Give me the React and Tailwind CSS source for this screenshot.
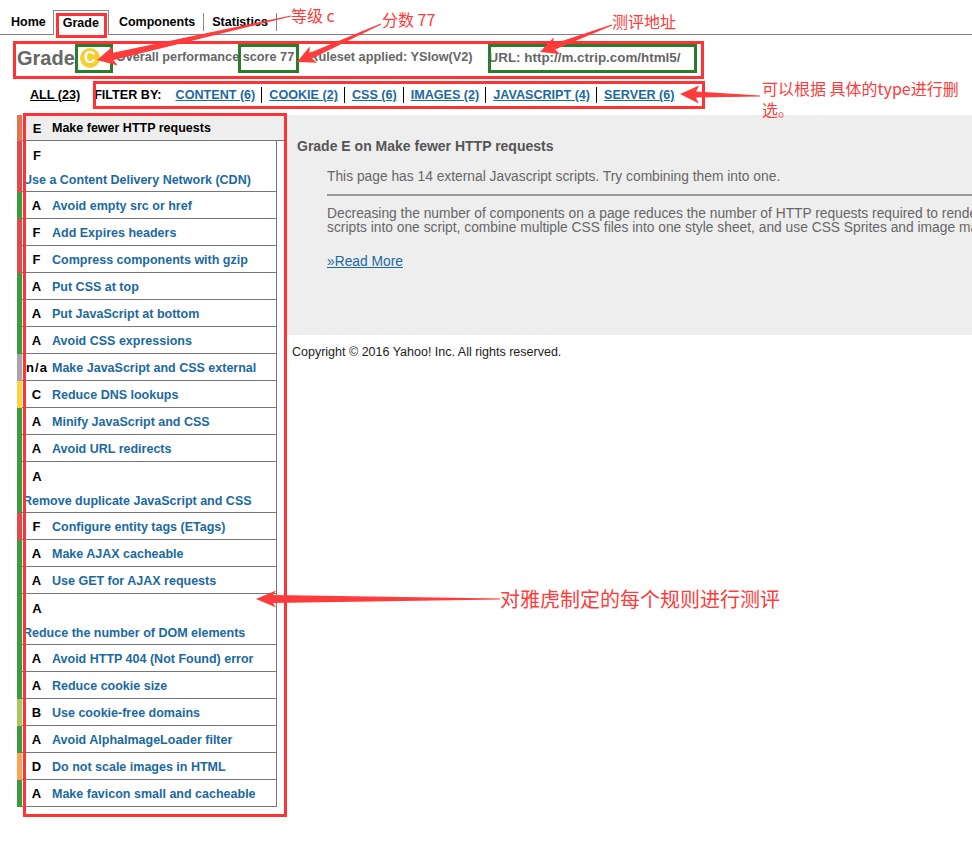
import React from 'react';

const BAR = {
  E: 'bg-[#e2744f]',
  F: 'bg-[#dc4a4a]',
  A: 'bg-[#3c9b3c]',
  'n/a': 'bg-[#a6a6a6]',
  C: 'bg-[#f6d43c]',
  B: 'bg-[#a9c75c]',
  D: 'bg-[#f6a452]',
};

const rules = [
  { grade: 'E', label: 'Make fewer HTTP requests', selected: true },
  { grade: 'F', label: 'Use a Content Delivery Network (CDN)', wrap: true },
  { grade: 'A', label: 'Avoid empty src or href' },
  { grade: 'F', label: 'Add Expires headers' },
  { grade: 'F', label: 'Compress components with gzip' },
  { grade: 'A', label: 'Put CSS at top' },
  { grade: 'A', label: 'Put JavaScript at bottom' },
  { grade: 'A', label: 'Avoid CSS expressions' },
  { grade: 'n/a', label: 'Make JavaScript and CSS external' },
  { grade: 'C', label: 'Reduce DNS lookups' },
  { grade: 'A', label: 'Minify JavaScript and CSS' },
  { grade: 'A', label: 'Avoid URL redirects' },
  { grade: 'A', label: 'Remove duplicate JavaScript and CSS', wrap: true },
  { grade: 'F', label: 'Configure entity tags (ETags)' },
  { grade: 'A', label: 'Make AJAX cacheable' },
  { grade: 'A', label: 'Use GET for AJAX requests' },
  { grade: 'A', label: 'Reduce the number of DOM elements', wrap: true },
  { grade: 'A', label: 'Avoid HTTP 404 (Not Found) error' },
  { grade: 'A', label: 'Reduce cookie size' },
  { grade: 'B', label: 'Use cookie-free domains' },
  { grade: 'A', label: 'Avoid AlphaImageLoader filter' },
  { grade: 'D', label: 'Do not scale images in HTML' },
  { grade: 'A', label: 'Make favicon small and cacheable' },
];

const filters = ['CONTENT (6)', 'COOKIE (2)', 'CSS (6)', 'IMAGES (2)', 'JAVASCRIPT (4)', 'SERVER (6)'];

// tapered red arrow, thin at the tail and wide at the head
function arrowPoints(x1, y1, x2, y2, shaftW, headW, headL) {
  const dx = x2 - x1;
  const dy = y2 - y1;
  const len = Math.hypot(dx, dy);
  const ux = dx / len;
  const uy = dy / len;
  const nx = -uy;
  const ny = ux;
  const bx = x2 - ux * headL;
  const by = y2 - uy * headL;
  const pts = [
    [x1 + nx * 0.5, y1 + ny * 0.5],
    [bx + nx * shaftW / 2, by + ny * shaftW / 2],
    [bx - ux * 3 + nx * headW / 2, by - uy * 3 + ny * headW / 2],
    [x2, y2],
    [bx - ux * 3 - nx * headW / 2, by - uy * 3 - ny * headW / 2],
    [bx - nx * shaftW / 2, by - ny * shaftW / 2],
    [x1 - nx * 0.5, y1 - ny * 0.5],
  ];
  return pts.map((p) => p.map((v) => v.toFixed(1)).join(',')).join(' ');
}

const arrows = [
  [291, 16, 97, 60, 7, 20, 16],
  [381, 24, 297, 62, 6, 18, 15],
  [612, 25, 540, 52, 6, 18, 15],
  [760, 96, 680, 94, 6, 18, 16],
  [500, 599, 256, 599, 8, 17, 17],
];

const RuleRow = ({ rule }) => {
  const { grade, label, selected, wrap } = rule;
  return (
    <div className="flex">
      <div className={`w-[5px] shrink-0 ${BAR[grade]}`} />
      {selected ? (
        <div className="flex h-[26px] w-[262px] shrink-0 items-center border-b border-[#777] bg-[#eeeeee] pl-px pt-[2px]">
          <span className="w-[28px] text-center text-[13px] font-bold text-black">{grade}</span>
          <span className="ml-px text-[12.5px] font-bold text-black">{label}</span>
        </div>
      ) : wrap ? (
        <div className="w-[255px] shrink-0 border-r border-b border-[#777] bg-white pl-px">
          <div className="flex h-[27px] items-center pt-[3px]">
            <span className="w-[28px] text-center text-[13px] font-bold text-black">{grade}</span>
          </div>
          <div className="flex h-[23px] items-center whitespace-nowrap pt-[2px] text-[12.5px] font-bold text-[#1b69a0]">
            {label}
          </div>
        </div>
      ) : (
        <div className="flex h-[27px] w-[255px] shrink-0 items-center border-r border-b border-[#777] bg-white pl-px pt-[2px]">
          <span className="w-[28px] text-center text-[13px] font-bold tracking-[1px] text-black">{grade}</span>
          <span className="ml-px whitespace-nowrap text-[12.5px] font-bold text-[#1b69a0]">{label}</span>
        </div>
      )}
    </div>
  );
};

export default function App() {
  return (
    <div className="relative h-[853px] w-[972px] overflow-hidden bg-white font-['Liberation_Sans',Arial,sans-serif]">
      {/* Tabs */}
      <div className="flex h-[35px] items-end border-b border-[#808080] pl-[11px]">
        <div className="flex h-[24px] items-center text-[12.5px] font-bold text-black">Home</div>
        <div className="-mb-px ml-[7px] flex h-[25px] items-center border border-b-0 border-[#888] bg-white px-[9px] text-[12.5px] font-bold text-black">
          Grade
        </div>
        <div className="ml-[10px] flex h-[24px] items-center text-[12.5px] font-bold text-black">
          Components
          <span className="ml-[8px] h-[18px] w-px bg-[#888]" />
        </div>
        <div className="ml-[8px] flex h-[24px] items-center text-[12.5px] font-bold text-black">
          Statistics
          <span className="ml-[8px] h-[18px] w-px bg-[#888]" />
        </div>
      </div>

      {/* Grade summary */}
      <div className="flex h-[46px] items-center pl-[17px] font-bold text-[#666]">
        <span className="text-[20px] leading-[24px]">Grade</span>
        <span className="ml-[5px] flex h-[20px] w-[20px] items-center justify-center rounded-full bg-[#f4cf2f] text-[16px] text-white">
          C
        </span>
        <span className="ml-[16px] text-[12.7px]">Overall performance score 77</span>
        <span className="ml-[15px] text-[12.7px]">Ruleset applied: YSlow(V2)</span>
        <span className="ml-[16px] text-[13.4px]">URL: http://m.ctrip.com/html5/</span>
      </div>

      {/* Filters */}
      <div className="flex h-[28px] items-center pl-[30px] text-[12.6px] font-bold">
        <span className="text-black underline">ALL (23)</span>
        <span className="ml-[14px] text-black">FILTER BY:</span>
        <div className="ml-[14px] flex items-center">
          {filters.map((f, i) => (
            <span
              key={f}
              className={i === 0 ? 'leading-[16px] text-[#1b69a0] underline' : 'ml-[6px] border-l border-black pl-[7px] leading-[16px] text-[#1b69a0] underline'}
            >
              {f}
            </span>
          ))}
        </div>
      </div>

      {/* Rules + detail */}
      <div className="mt-[6px] flex">
        <div className="w-[277px] shrink-0 pl-[17px]">
          {rules.map((r) => (
            <RuleRow key={r.label} rule={r} />
          ))}
        </div>
        <div className="ml-[7px] min-w-0 flex-1 overflow-hidden">
          <div className="h-[220px] bg-[#eeeeee] pl-[13px] pt-[23px]">
            <div className="text-[14px] font-bold leading-[16px] text-[#555]">Grade E on Make fewer HTTP requests</div>
            <div className="pl-[30px]">
              <div className="mt-[15px] text-[13.8px] leading-[16px] text-[#666]">
                This page has 14 external Javascript scripts. Try combining them into one.
              </div>
              <div className="mt-[9px] border-t-2 border-[#9a9a9a]" />
              <div className="mt-[11px] whitespace-nowrap text-[13.8px] leading-[14px] text-[#666]">
                <div>
                  Decreasing the number of components on a page reduces the number of HTTP requests required to render the page, resulting in faster page loads.
                </div>
                <div>
                  scripts into one script, combine multiple CSS files into one style sheet, and use CSS Sprites and image maps.
                </div>
              </div>
              <div className="mt-[19px] text-[13.8px] leading-[16px] text-[#1b69a0] underline">»Read More</div>
            </div>
          </div>
          <div className="mt-[9px] pl-[8px] text-[12.5px] leading-[16px] text-[#222]">
            Copyright © 2016 Yahoo! Inc. All rights reserved.
          </div>
        </div>
      </div>

      {/* Annotations */}
      <svg className="pointer-events-none absolute left-0 top-0" width="972" height="853" viewBox="0 0 972 853">
        <g fill="none" strokeWidth="3">
          <rect x="57.5" y="14.5" width="48" height="22" stroke="#ff3333" />
          <rect x="14.5" y="42.5" width="688" height="35" stroke="#ff3333" />
          <rect x="94.5" y="82.5" width="609" height="25" stroke="#ff3333" />
          <rect x="24.5" y="114.5" width="261" height="701" stroke="#ff3333" />
          <rect x="76.5" y="45.5" width="35" height="26" stroke="#2b7d2b" />
          <rect x="239.5" y="45.5" width="58" height="26" stroke="#2b7d2b" />
          <rect x="489.5" y="45.5" width="206" height="26" stroke="#2b7d2b" />
        </g>
        {arrows.map((a, i) => (
          <polygon key={i} points={arrowPoints(...a)} fill="#ff3b3b" />
        ))}
      </svg>
      <div className="pointer-events-none absolute left-[291px] top-[5px] font-['Noto_Sans_CJK_SC',sans-serif] text-[16px] leading-[20px] text-[#ff3b3b]">
        等级 c
      </div>
      <div className="pointer-events-none absolute left-[382px] top-[9px] font-['Noto_Sans_CJK_SC',sans-serif] text-[16px] leading-[20px] text-[#ff3b3b]">
        分数 77
      </div>
      <div className="pointer-events-none absolute left-[612px] top-[11px] font-['Noto_Sans_CJK_SC',sans-serif] text-[16px] leading-[20px] text-[#ff3b3b]">
        测评地址
      </div>
      <div className="pointer-events-none absolute left-[762px] top-[78px] font-['Noto_Sans_CJK_SC',sans-serif] text-[16px] leading-[20px] text-[#ff3b3b]">
        可以根据 具体的type进行删
      </div>
      <div className="pointer-events-none absolute left-[762px] top-[99px] font-['Noto_Sans_CJK_SC',sans-serif] text-[16px] leading-[20px] text-[#ff3b3b]">
        选。
      </div>
      <div className="pointer-events-none absolute left-[500px] top-[587px] font-['Noto_Sans_CJK_SC',sans-serif] text-[20px] leading-[24px] text-[#ff3b3b]">
        对雅虎制定的每个规则进行测评
      </div>
    </div>
  );
}
